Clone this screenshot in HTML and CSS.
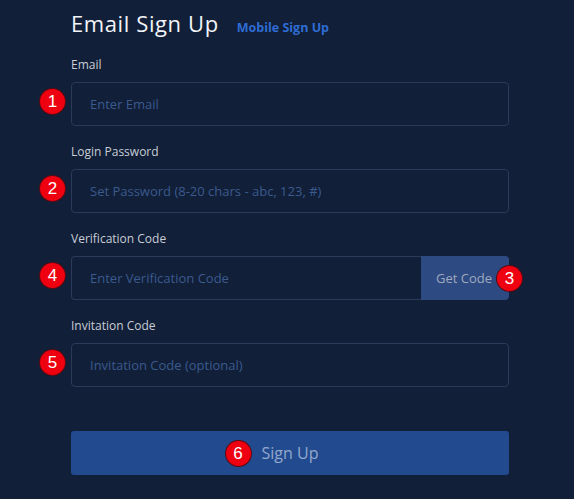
FILE: index.html
```html
<!DOCTYPE html>
<html lang="en">
<head>
<meta charset="utf-8">
<title>Email Sign Up</title>
<link rel="stylesheet" href="styles.css">
</head>
<body>
<main class="form">
  <header class="head">
    <h1 class="title">Email Sign Up</h1>
    <a class="switch" href="#">Mobile Sign Up</a>
  </header>

  <div class="field">
    <label class="label">Email</label>
    <div class="control">
      <span class="badge badge-side">1</span>
      <input class="input" type="text" placeholder="Enter Email">
    </div>
  </div>

  <div class="field">
    <label class="label">Login Password</label>
    <div class="control">
      <span class="badge badge-side">2</span>
      <input class="input" type="password" placeholder="Set Password (8-20 chars - abc, 123, #)">
    </div>
  </div>

  <div class="field">
    <label class="label">Verification Code</label>
    <div class="control control-split">
      <span class="badge badge-side">4</span>
      <input class="input input-split" type="text" placeholder="Enter Verification Code">
      <button class="code-btn" type="button">Get Code<span class="badge badge-code">3</span></button>
    </div>
  </div>

  <div class="field">
    <label class="label">Invitation Code</label>
    <div class="control">
      <span class="badge badge-side">5</span>
      <input class="input" type="text" placeholder="Invitation Code (optional)">
    </div>
  </div>

  <button class="submit" type="button"><span class="submit-text"><span class="badge badge-submit">6</span>Sign Up</span></button>
</main>
</body>
</html>
```

FILE: styles.css
```css
html, body {
  margin: 0;
  padding: 0;
  background: #111f38;
  font-family: "Open Sans", "Noto Sans", sans-serif;
}

.form {
  width: 438px;
  padding: 9px 0 0 71px;
}

.head {
  display: flex;
  align-items: baseline;
  gap: 18px;
  margin-bottom: 20px;
}

.title {
  margin: 0;
  font-size: 22px;
  line-height: 28px;
  font-weight: 400;
  color: #f2f4f8;
  letter-spacing: 0.6px;
}

.switch {
  font-size: 12.5px;
  font-weight: 700;
  color: #2f6cd4;
  text-decoration: none;
}

.field {
  margin-bottom: 18px;
}

.label {
  display: block;
  font-size: 12px;
  line-height: 16px;
  color: #c9cdd6;
  margin-bottom: 9px;
}

.control {
  position: relative;
  display: flex;
}

.input {
  box-sizing: border-box;
  flex: 1;
  height: 44px;
  margin: 0;
  padding: 0 18px;
  border: 1px solid #2c3a5a;
  border-radius: 4px;
  background: #111f38;
  font-family: inherit;
  font-size: 13px;
  color: #c9cdd6;
  outline: none;
}

.input::placeholder {
  color: #3b5a8e;
}

.input-split {
  border-radius: 4px 0 0 4px;
  border-right: none;
}

.code-btn {
  position: relative;
  box-sizing: border-box;
  width: 88px;
  height: 44px;
  margin: 0;
  padding: 0 0 0 15px;
  border: none;
  border-radius: 0 4px 4px 0;
  background: #2e4a83;
  font-family: inherit;
  font-size: 13px;
  color: #9ea9be;
  text-align: left;
}

.submit {
  display: flex;
  justify-content: center;
  align-items: center;
  box-sizing: border-box;
  width: 438px;
  height: 44px;
  margin-top: 44px;
  border: none;
  border-radius: 3px;
  background: #224b8f;
  font-family: inherit;
  font-size: 16px;
  color: #93a8cd;
}

.submit-text {
  position: relative;
}

.badge {
  position: absolute;
  width: 25px;
  height: 25px;
  border-radius: 50%;
  background: #ee0010;
  color: #ffffff;
  font-family: "Liberation Sans", Arial, sans-serif;
  font-size: 17px;
  line-height: 25px;
  text-align: center;
  box-shadow: 0 0 0 1px #5a0a12;
}

.badge-side {
  left: -31px;
  top: 7px;
}

.badge-code {
  right: -13px;
  top: 10px;
}

.badge-submit {
  left: -36px;
  top: -1px;
}
```
